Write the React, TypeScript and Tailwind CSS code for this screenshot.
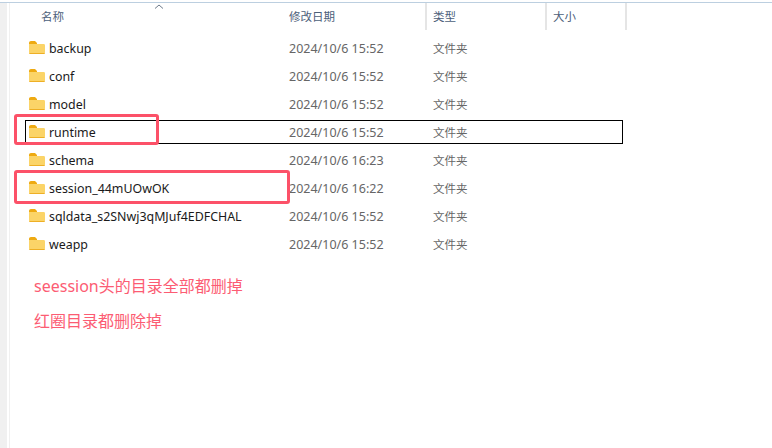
const rows = [
  { name: 'backup', date: '2024/10/6 15:52' },
  { name: 'conf', date: '2024/10/6 15:52' },
  { name: 'model', date: '2024/10/6 15:52' },
  { name: 'runtime', date: '2024/10/6 15:52', focused: true, mark: 'h-[31px] w-[145px]' },
  { name: 'schema', date: '2024/10/6 16:23' },
  { name: 'session_44mUOwOK', date: '2024/10/6 16:22', mark: 'h-[34px] w-[276px]' },
  { name: 'sqldata_s2SNwj3qMJuf4EDFCHAL', date: '2024/10/6 15:52' },
  { name: 'weapp', date: '2024/10/6 15:52' },
];

function Folder() {
  return (
    <svg width="16" height="13" viewBox="0 0 16 13" className="mb-[1px] shrink-0">
      <path d="M0 2 C0 0.8 0.8 0 2 0 H6 L8 2 V5 H0 Z" fill="#eeaa12" />
      <path d="M0 3 H14.5 C15.5 3 16 3.5 16 4.5 V11 C16 12.4 15.4 13 14 13 H2 C0.6 13 0 12.4 0 11 Z" fill="#fbd468" />
      <path d="M0 12 H16 C15.9 12.7 15.3 13 14 13 H2 C0.7 13 0.1 12.7 0 12 Z" fill="#eeaf25" />
    </svg>
  );
}

function Head({ label, w }: { label: string; w: string }) {
  return (
    <div className={`${w} h-[27px] shrink-0 border-r-2 border-[#e5e5e5] pl-[6px] pt-[4px] text-[11.5px] leading-[20px] text-[#4c607a]`}>
      {label}
    </div>
  );
}

export default function App() {
  return (
    <div className="flex h-[448px] w-[772px] flex-col overflow-hidden bg-white font-['Noto_Sans','Noto_Sans_CJK_SC',sans-serif]">
      <div className="mt-[2px] h-[1px] shrink-0 bg-[#bccfe0]" />
      <div className="flex min-h-0 flex-1">
        <div className="w-[7px] shrink-0 bg-[#f0f0f0]" />
        <div className="ml-[2px] min-w-0 flex-1 border-l border-[#f0f0f0]">
          <div className="relative flex pl-[273px]">
            <svg width="10" height="5" viewBox="0 0 10 5" className="absolute left-[144px] top-[1px]">
              <path d="M1 4.5 L5 1 L9 4.5" fill="none" stroke="#6d7a8a" strokeWidth="1" />
            </svg>
            <div className="absolute left-[31px] top-[4px] text-[11.5px] leading-[20px] text-[#4c607a]">名称</div>
            <Head label="修改日期" w="w-[144px]" />
            <Head label="类型" w="w-[120px]" />
            <Head label="大小" w="w-[80px]" />
          </div>
          <div className="mt-[6px] flex flex-col">
            {rows.map((r) => (
              <div key={r.name} className="relative h-[28px]">
                <div className={`ml-[15px] flex h-[24px] w-[598px] items-center border ${r.focused ? 'border-black' : 'border-transparent'}`}>
                  <div className="flex w-[263px] items-center gap-[4px] pl-[3px]">
                    <Folder />
                    <span className="pt-[2px] text-[12.4px] text-[#1a1a1a]">{r.name}</span>
                  </div>
                  <span className="w-[144px] pt-[2px] text-[12.5px] text-[#666]">{r.date}</span>
                  <span className="pt-[2px] text-[11.5px] text-[#666]">文件夹</span>
                </div>
                {r.mark && (
                  <div className={`absolute left-[4px] top-[-6px] ${r.mark} rounded-[3px] border-[3px] border-[#fc5168]`} />
                )}
              </div>
            ))}
          </div>
          <div className="ml-[24px] mt-[14px] text-[16px] leading-[24px] text-[#fc5c73]">seession头的目录全部都删掉</div>
          <div className="ml-[24px] mt-[11px] text-[16px] leading-[24px] text-[#fc5c73]">红圈目录都删除掉</div>
        </div>
      </div>
    </div>
  );
}
